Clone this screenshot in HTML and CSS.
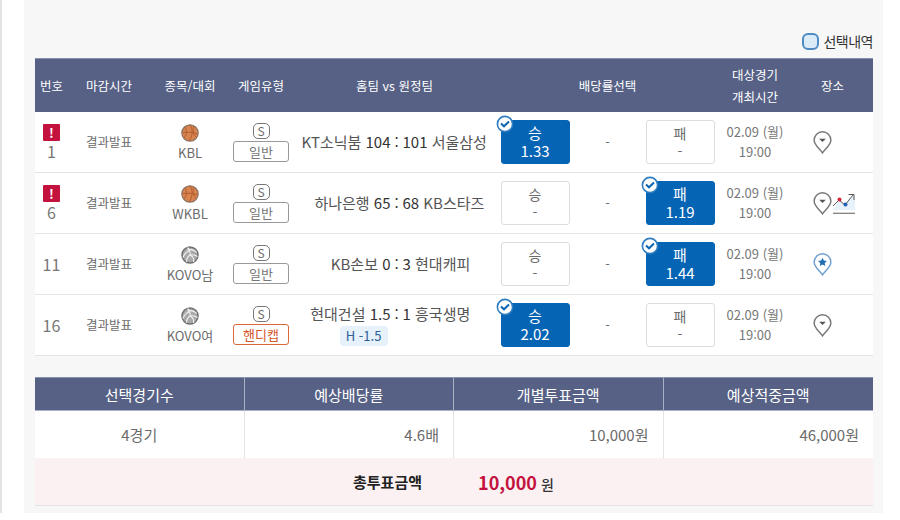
FILE: index.html
```html
<!DOCTYPE html>
<html lang="ko">
<head>
    <meta charset="UTF-8">
    <meta name="viewport" content="width=device-width, initial-scale=1.0">
    <title>선택내역</title>
    <link rel="stylesheet" href="styles.css">
</head>
<body>
    <svg class="icon-defs" width="0" height="0">
        <defs>
            <symbol id="ico-basket" viewBox="0 0 18 18">
                <circle cx="9" cy="9" r="8.200" fill="#d9834f" stroke="#8a7465" stroke-width="1.200"/>
                <path d="M1.500 8.500C6 8 12 8 16.500 10M9 1c3 4 3 11-1 16M4 3c2 3 2 8-1 11M13 2.500c-2 4 0 9 2.500 11" fill="none" stroke="#a9552a" stroke-width=".8"/>
            </symbol>
            <symbol id="ico-volley" viewBox="0 0 18 18">
                <circle cx="9" cy="9" r="8" fill="#a9a9a9" stroke="#6f6f6f" stroke-width="1.500"/>
                <path d="M9 9C9.500 6 8.500 3.500 6.500 1.500M9 9c3-.5 5.500 0 7.500 1.500M9 9c-2 1.500-3.500 4-3.500 6.800M6.500 4c3.500-.8 7 0 9.300 2.500M2 11.500C3 8.500 5 6 8.500 4.800M12.500 16c.8-3-.5-5.500-3.500-7" fill="none" stroke="#f2f2f2" stroke-width="1.100"/>
            </symbol>
            <symbol id="ico-check" viewBox="0 0 18 18">
                <circle cx="9" cy="9" r="7.600" fill="#fff" stroke="#2f7cc0" stroke-width="1.600"/>
                <path d="M5 8.500l3 2.800 5-4.800" fill="none" stroke="#0d66b2" stroke-width="2"/>
            </symbol>
            <symbol id="ico-pin" viewBox="0 0 20 24">
                <path d="M10 23C7.500 19 1.200 14.500 1.200 9.500a8.800 8.800 0 0 1 17.600 0c0 5-6.300 9.500-8.800 13.500z" fill="#fff" stroke="#777" stroke-width="1.500"/>
                <path d="M6.500 8h7L10 11.500z" fill="#555"/>
            </symbol>
            <symbol id="ico-pin-star" viewBox="0 0 20 24">
                <path d="M10 23C7.500 19 1.200 14.500 1.200 9.500a8.800 8.800 0 0 1 17.600 0c0 5-6.300 9.500-8.800 13.500z" fill="#fff" stroke="#6f9fd0" stroke-width="1.500"/>
                <path d="M10 4.800l1.400 3 3.300.4-2.400 2.200.6 3.200-2.900-1.600-2.900 1.600.6-3.200-2.400-2.200 3.300-.4z" fill="#1f6fb5"/>
            </symbol>
        </defs>
    </svg>

    <div class="page">
        <div class="panel">
            <div class="pick-legend">
                <span class="legend-box"></span>
                <span>선택내역</span>
            </div>

            <table class="game-table">
                <colgroup>
                    <col class="c-no"><col class="c-close"><col class="c-league"><col class="c-type"><col class="c-team">
                    <col class="c-win"><col class="c-draw"><col class="c-lose"><col class="c-date"><col class="c-place">
                </colgroup>
                <thead>
                    <tr>
                        <th>번호</th>
                        <th>마감시간</th>
                        <th>종목/대회</th>
                        <th>게임유형</th>
                        <th>홈팀 vs 원정팀</th>
                        <th colspan="3">배당률선택</th>
                        <th>대상경기<br>개최시간</th>
                        <th>장소</th>
                    </tr>
                </thead>
                <tbody>
                    <tr>
                        <td class="no"><span class="warn">!</span>1</td>
                        <td>결과발표</td>
                        <td class="league"><svg class="sport"><use href="#ico-basket"/></svg>KBL</td>
                        <td><span class="s-badge">S</span><span class="type-badge">일반</span></td>
                        <td class="team"><div class="score"><span class="home">KT소닉붐 <b>104</b></span><b class="colon">:</b><span class="away"><b>101</b> 서울삼성</span></div></td>
                        <td><div class="odd on"><svg class="check"><use href="#ico-check"/></svg>승<br>1.33</div></td>
                        <td class="dash">-</td>
                        <td><div class="odd">패<br>-</div></td>
                        <td class="date">02.09 (월)<br>19:00</td>
                        <td><div class="place"><svg class="pin"><use href="#ico-pin"/></svg></div></td>
                    </tr>
                    <tr>
                        <td class="no"><span class="warn">!</span>6</td>
                        <td>결과발표</td>
                        <td class="league"><svg class="sport"><use href="#ico-basket"/></svg>WKBL</td>
                        <td><span class="s-badge">S</span><span class="type-badge">일반</span></td>
                        <td class="team"><div class="score"><span class="home">하나은행 <b>65</b></span><b class="colon">:</b><span class="away"><b>68</b> KB스타즈</span></div></td>
                        <td><div class="odd">승<br>-</div></td>
                        <td class="dash">-</td>
                        <td><div class="odd on"><svg class="check"><use href="#ico-check"/></svg>패<br>1.19</div></td>
                        <td class="date">02.09 (월)<br>19:00</td>
                        <td>
                            <div class="place">
                                <svg class="pin"><use href="#ico-pin"/></svg>
                                <svg class="chart" viewBox="0 0 22 21">
                                    <path d="M0 17L6 7l6 5 7-8h3v13z" fill="#e6f1fa"/>
                                    <path d="M0 13l6-6 6 5 8-10M15.500 1.500h5.500V7" fill="none" stroke="#555" stroke-width="1"/>
                                    <path d="M0 20.300h22" stroke="#777" stroke-width="1.200"/>
                                    <circle cx="6.500" cy="6.500" r="2" fill="#d5243b"/>
                                    <circle cx="12.500" cy="11.500" r="2" fill="#1f5fb5"/>
                                </svg>
                            </div>
                        </td>
                    </tr>
                    <tr>
                        <td class="no">11</td>
                        <td>결과발표</td>
                        <td class="league"><svg class="sport"><use href="#ico-volley"/></svg>KOVO남</td>
                        <td><span class="s-badge">S</span><span class="type-badge">일반</span></td>
                        <td class="team"><div class="score"><span class="home">KB손보 <b>0</b></span><b class="colon">:</b><span class="away"><b>3</b> 현대캐피</span></div></td>
                        <td><div class="odd">승<br>-</div></td>
                        <td class="dash">-</td>
                        <td><div class="odd on"><svg class="check"><use href="#ico-check"/></svg>패<br>1.44</div></td>
                        <td class="date">02.09 (월)<br>19:00</td>
                        <td><div class="place"><svg class="pin"><use href="#ico-pin-star"/></svg></div></td>
                    </tr>
                    <tr>
                        <td class="no">16</td>
                        <td>결과발표</td>
                        <td class="league"><svg class="sport"><use href="#ico-volley"/></svg>KOVO여</td>
                        <td><span class="s-badge">S</span><span class="type-badge handicap">핸디캡</span></td>
                        <td class="team">
                            <div class="score">
                                <span class="home">현대건설 <b>1.5</b></span><b class="colon">:</b><span class="away"><b>1</b> 흥국생명</span>
                                <span class="hcp">H -1.5</span>
                            </div>
                        </td>
                        <td><div class="odd on"><svg class="check"><use href="#ico-check"/></svg>승<br>2.02</div></td>
                        <td class="dash">-</td>
                        <td><div class="odd">패<br>-</div></td>
                        <td class="date">02.09 (월)<br>19:00</td>
                        <td><div class="place"><svg class="pin"><use href="#ico-pin"/></svg></div></td>
                    </tr>
                </tbody>
            </table>

            <table class="sum-table">
                <thead>
                    <tr>
                        <th>선택경기수</th>
                        <th>예상배당률</th>
                        <th>개별투표금액</th>
                        <th>예상적중금액</th>
                    </tr>
                </thead>
                <tbody>
                    <tr>
                        <td class="center">4경기</td>
                        <td>4.6배</td>
                        <td>10,000원</td>
                        <td>46,000원</td>
                    </tr>
                    <tr class="total-row">
                        <td colspan="4">
                            <div class="total">
                                <strong>총투표금액</strong>
                                <span class="total-value"><em>10,000</em> 원</span>
                            </div>
                        </td>
                    </tr>
                </tbody>
            </table>
        </div>
    </div>
</body>
</html>
```

FILE: styles.css
```css
* {
    box-sizing: border-box;
}

body {
    margin: 0;
    background: #fff;
    color: #6b6b6b;
    font-family: "Noto Sans CJK KR", "Noto Sans", sans-serif;
    font-size: 12.5px;
}

.icon-defs {
    display: block;
}

.page {
    width: 883px;
    height: 513px;
    padding-left: 22px;
    border-left: 2px solid #e2e2e2;
}

.panel {
    width: 859px;
    height: 513px;
    padding: 27px 10px 0 11px;
    background: #f7f7f7;
}

.pick-legend {
    display: flex;
    justify-content: flex-end;
    align-items: center;
    gap: 4px;
    height: 28px;
    margin-bottom: 3px;
    color: #333;
    font-size: 14px;
    letter-spacing: -0.5px;
}

.legend-box {
    width: 17px;
    height: 17px;
    background: #dcebf8;
    border: 2px solid #4f8cc4;
    border-radius: 6px;
}

table {
    width: 100%;
    border-collapse: separate;
    border-spacing: 0;
    table-layout: fixed;
}

/* game list */
.c-no { width: 33px; }
.c-close { width: 82px; }
.c-league { width: 80px; }
.c-type { width: 62px; }
.c-team { width: 205px; }
.c-win { width: 76px; }
.c-draw { width: 69px; }
.c-lose { width: 76px; }
.c-date { width: 74px; }
.c-place { width: 81px; }

.game-table th {
    height: 54px;
    padding: 0;
    background: #566185;
    border-top: 1px solid #8791ad;
    color: #fff;
    font-size: 12.5px;
    font-weight: 400;
    line-height: 22px;
}

.game-table td {
    height: 61px;
    padding: 0;
    background: #fff;
    border-bottom: 1px solid #e4e4e4;
    text-align: center;
    line-height: 18px;
}

.game-table td.no {
    color: #777;
    font-size: 16px;
}

.warn {
    display: block;
    width: 17px;
    height: 17px;
    margin: 0 auto 1px;
    background: #c4123f;
    border-radius: 1px;
    color: #fff;
    font-size: 13px;
    font-weight: 700;
    line-height: 17px;
}

.game-table td.league {
    font-size: 13px;
    line-height: 16px;
}

.sport {
    display: block;
    width: 18px;
    height: 18px;
    margin: 0 auto 3px;
}

.s-badge {
    display: block;
    width: 17px;
    height: 16px;
    margin: 0 auto 2px;
    border: 1px solid #777;
    border-radius: 5px;
    font-size: 12px;
    line-height: 14px;
}

.type-badge {
    display: block;
    width: 56px;
    height: 21px;
    margin: 0 auto;
    border: 1px solid #999;
    border-radius: 3px;
    background: #fff;
    color: #777;
    font-size: 13px;
    line-height: 19px;
}

.type-badge.handicap {
    border-color: #d9693a;
    color: #d4562a;
}

.team {
    color: #555;
    font-size: 15px;
}

.score {
    display: grid;
    grid-template-columns: 1fr 12px 1fr;
    padding-left: 4px;
    white-space: nowrap;
}

.home {
    text-align: right;
}

.away {
    text-align: left;
}

.colon {
    text-align: center;
}

.score b {
    color: #333;
    font-weight: 400;
}

.hcp {
    grid-column: 1;
    justify-self: end;
    width: 48px;
    height: 20px;
    margin: 3px 3px 0 0;
    background: #e6f1fb;
    border-radius: 4px;
    color: #2e5f96;
    font-size: 13px;
    line-height: 20px;
    text-align: center;
}

.odd {
    position: relative;
    width: 69px;
    height: 44px;
    margin: 0 auto;
    padding-top: 3px;
    background: #fff;
    border: 1px solid #ddd;
    border-radius: 3px;
    color: #6b6b6b;
    font-size: 14px;
    line-height: 18px;
}

.odd.on {
    background: #0565b4;
    border-color: #0565b4;
    color: #fff;
    font-size: 15px;
}

.check {
    position: absolute;
    top: -6px;
    left: -6px;
    width: 18px;
    height: 18px;
}

.game-table td.dash {
    font-size: 13px;
}

.game-table td.date {
    color: #777;
    font-size: 13px;
    line-height: 20px;
}

.place {
    display: flex;
    align-items: center;
    gap: 1px;
    padding-left: 21px;
}

.pin {
    width: 19px;
    height: 23px;
}

.chart {
    width: 22px;
    height: 21px;
}

/* summary */
.sum-table {
    margin-top: 21px;
}

.sum-table th {
    height: 34px;
    padding: 0;
    background: #566185;
    border-top: 1px solid #8791ad;
    border-right: 1px solid #a9b0c4;
    border-bottom: 1px solid #a9b0c4;
    color: #fff;
    font-size: 15px;
    font-weight: 400;
}

.sum-table td {
    height: 47px;
    padding: 0 14px;
    background: #fff;
    border-right: 1px solid #e4e4e4;
    font-size: 15px;
    text-align: right;
}

.sum-table th:last-child,
.sum-table td:last-child {
    border-right: 0;
}

.sum-table td.center {
    text-align: center;
}

.sum-table .total-row td {
    height: 48px;
    background: #fbf1f3;
    border-right: 0;
    border-bottom: 1px solid #e4e4e4;
}

.total {
    display: flex;
    align-items: center;
    gap: 56px;
    padding-left: 304px;
    color: #333;
}

.total strong {
    color: #222;
    font-size: 15px;
}

.total-value {
    font-size: 14px;
    font-weight: 500;
}

.total-value em {
    color: #c4123f;
    font-size: 18px;
    font-style: normal;
    font-weight: 700;
}
```
